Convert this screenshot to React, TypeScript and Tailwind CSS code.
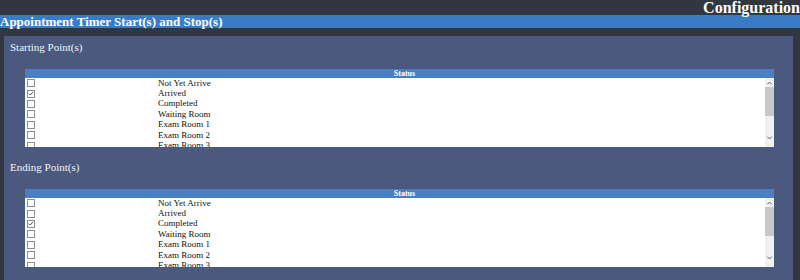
import React from 'react';

const statuses = ['Not Yet Arrive', 'Arrived', 'Completed', 'Waiting Room', 'Exam Room 1', 'Exam Room 2', 'Exam Room 3'];

function Check({ checked }: { checked: boolean }) {
    return (
        <span className="flex items-center justify-center w-[8px] h-[8px] border border-[#8f8f8f] bg-white">
            {checked && (
                <svg viewBox="0 0 8 8" className="w-[7px] h-[7px]">
                    <path d="M1.2 4.2 L3 6 L6.8 1.6" fill="none" stroke="#333" strokeWidth="1.1" />
                </svg>
            )}
        </span>
    );
}

function StatusTable({ checked }: { checked: string }) {
    return (
        <div className="ml-[21px] mr-[19px]">
            <div className="h-[9px] bg-[#4a80c2] flex items-center justify-center text-white font-bold text-[8px] leading-none pl-[10px]">
                Status
            </div>
            <div className="flex h-[69px] bg-white">
                <div className="flex-1 overflow-hidden">
                    {statuses.map((s) => (
                        <div key={s} className="flex items-center h-[10.4px]">
                            <div className="w-[133px] pl-[2px] flex items-center">
                                <Check checked={s === checked} />
                            </div>
                            <span className="text-[9px] leading-none text-[#111]">{s}</span>
                        </div>
                    ))}
                </div>
                <div className="w-[9px] bg-[#f0f0f0] flex flex-col items-center">
                    <svg viewBox="0 0 8 8" className="w-[7px] h-[8px] mt-[1px]">
                        <path d="M1.5 5.5 L4 3 L6.5 5.5" fill="none" stroke="#555" strokeWidth="1.1" />
                    </svg>
                    <div className="w-full h-[29px] bg-[#c8c8c8]" />
                    <div className="flex-1" />
                    <svg viewBox="0 0 8 8" className="w-[7px] h-[8px] mb-[5px]">
                        <path d="M1.5 2.5 L4 5 L6.5 2.5" fill="none" stroke="#555" strokeWidth="1.1" />
                    </svg>
                </div>
            </div>
        </div>
    );
}

export default function App() {
    return (
        <div className="w-[800px] h-[280px] overflow-hidden bg-[#31363f] font-['Liberation_Serif',serif]">
            <div className="h-[15px] flex items-center justify-end text-white font-bold text-[16px] leading-none">
                Configuration
            </div>
            <div className="h-[13px] bg-[#3a7bc8] flex items-center text-white font-bold text-[13px] leading-none">
                Appointment Timer Start(s) and Stop(s)
            </div>
            <div className="mt-[8px] ml-[4px] w-[789px] h-[260px] bg-[#4a597d]">
                <div className="pt-[5px] pl-[6px] h-[33px] text-[#f2f2f2] text-[11px] leading-[13px]">Starting Point(s)</div>
                <StatusTable checked="Arrived" />
                <div className="pt-[14px] pl-[6px] h-[42px] text-[#f2f2f2] text-[11px] leading-[13px]">Ending Point(s)</div>
                <StatusTable checked="Completed" />
            </div>
        </div>
    );
}
